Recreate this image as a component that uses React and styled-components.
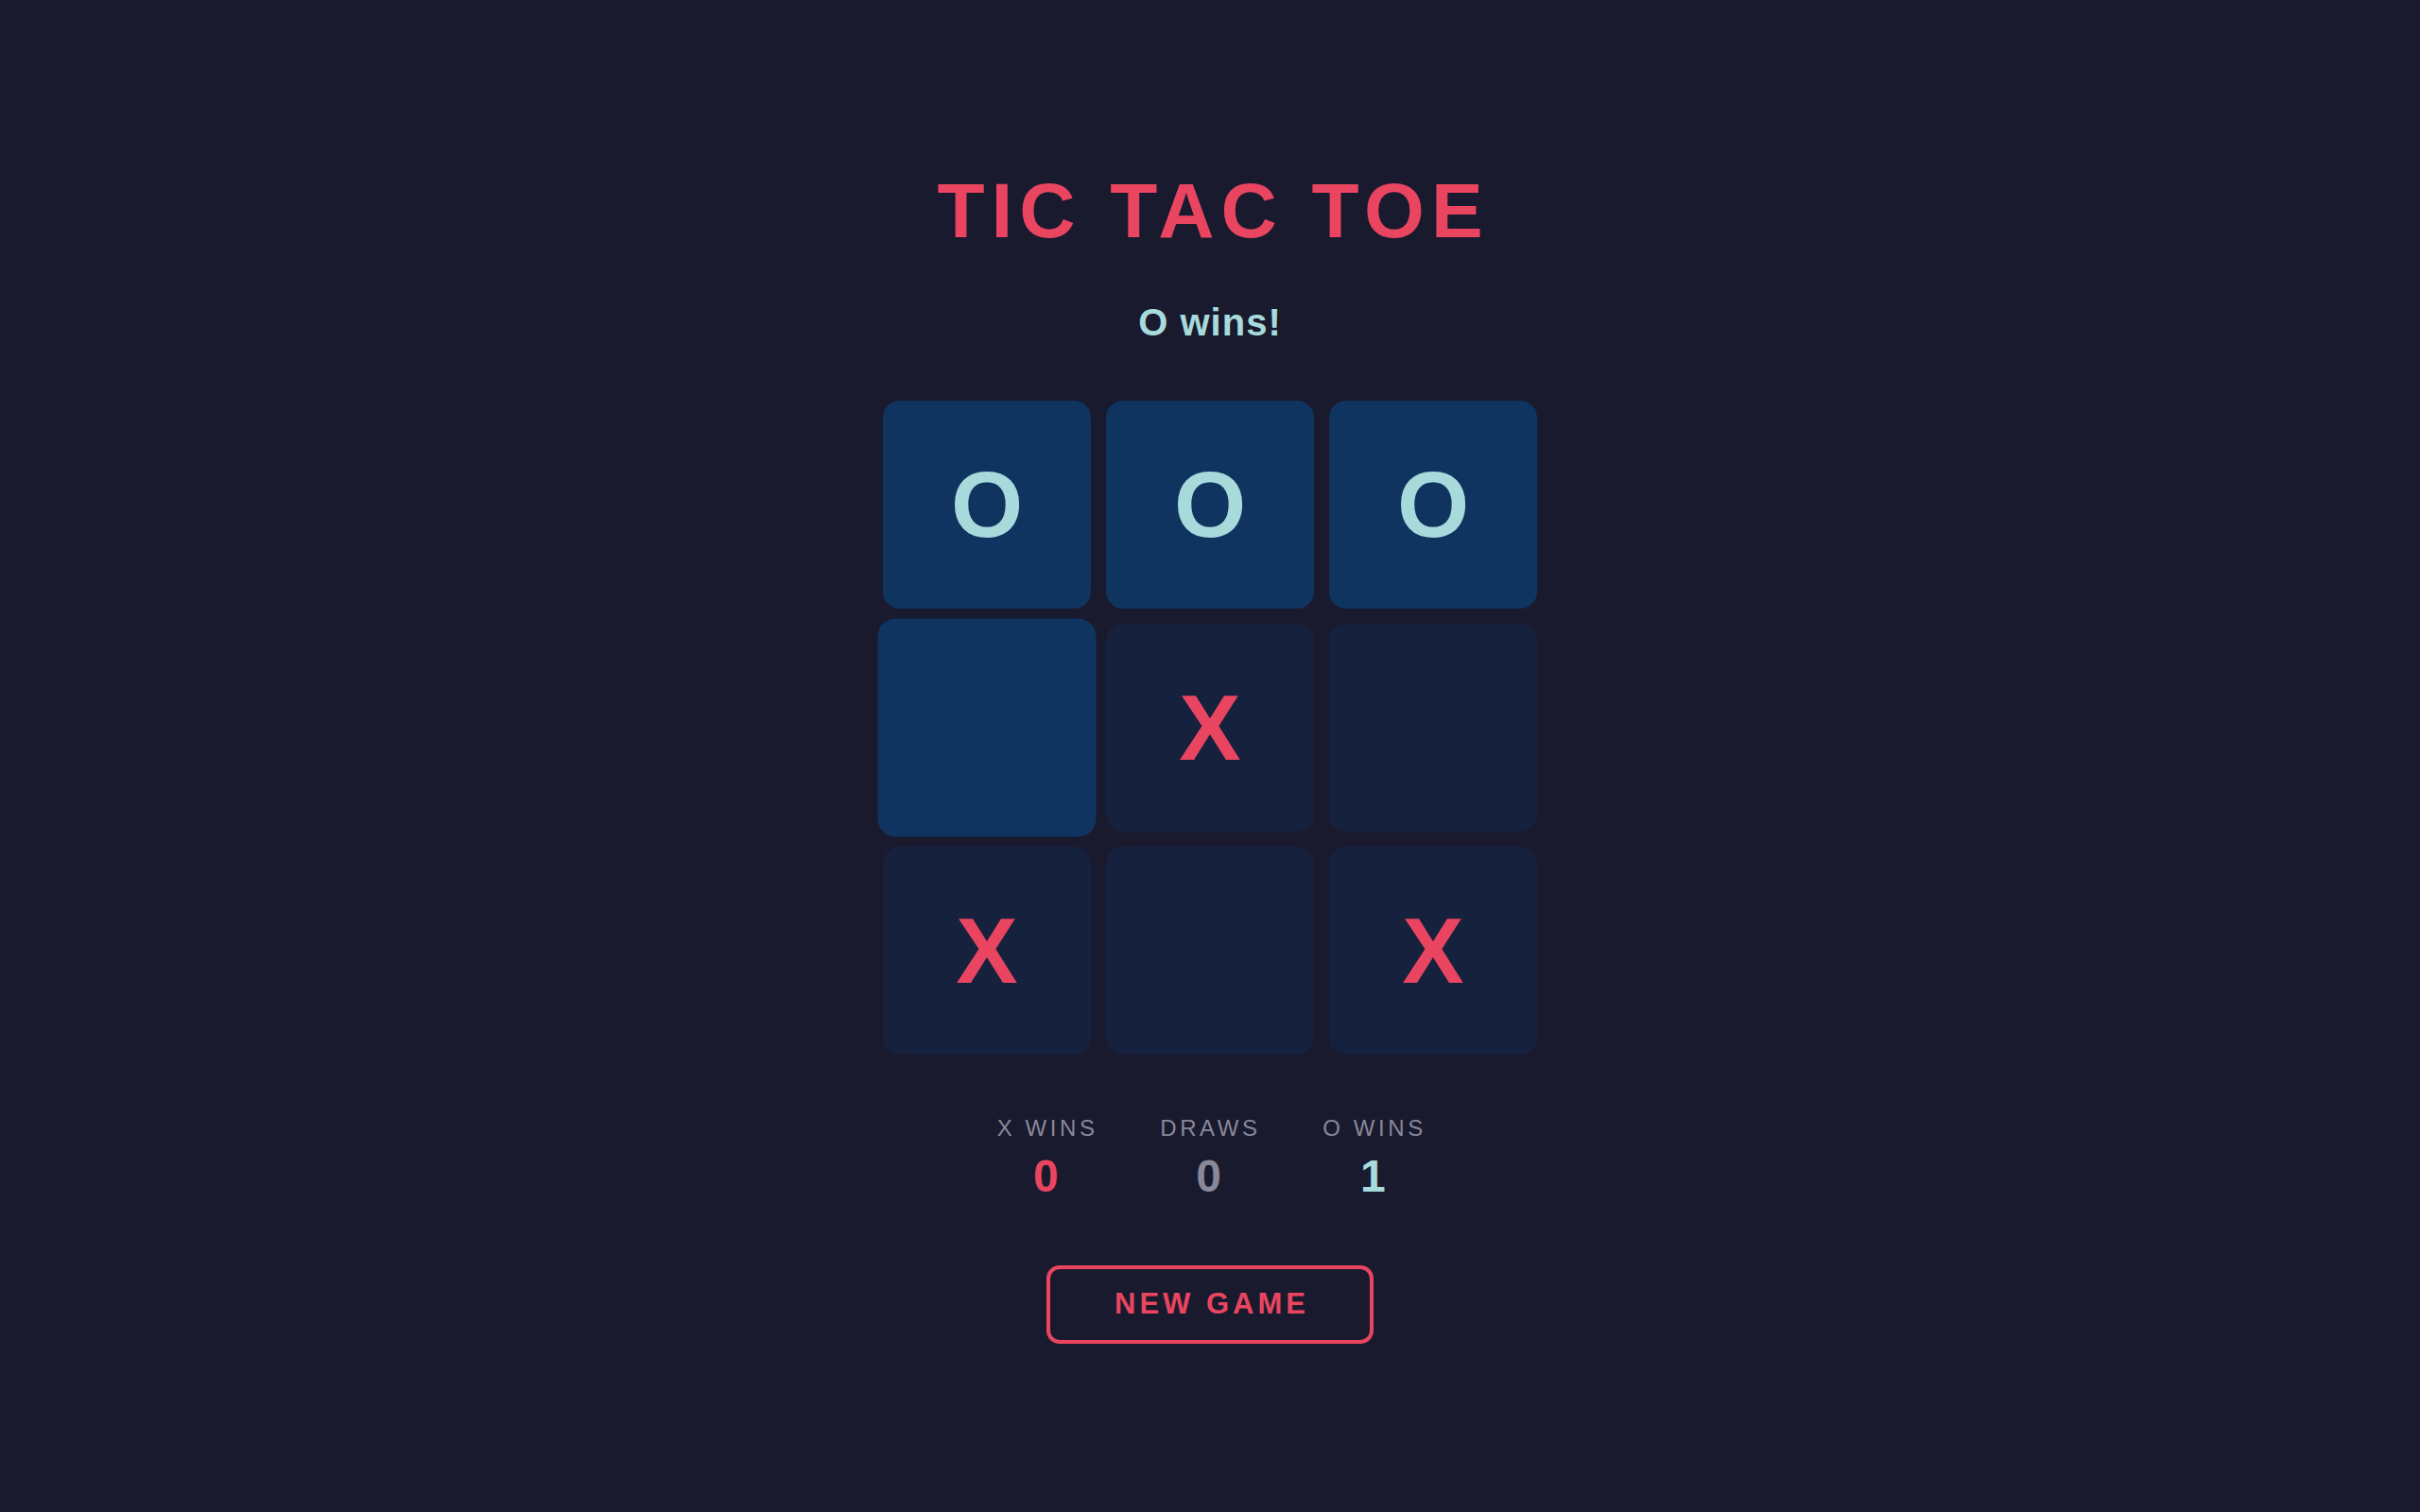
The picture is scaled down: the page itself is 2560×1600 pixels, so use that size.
import styled, { createGlobalStyle } from 'styled-components';

const RED = '#e94560';
const TEAL = '#a8dadc';
const GREY = '#888899';

const board = ['O', 'O', 'O', '', 'X', '', 'X', '', 'X'];
const winLine = [0, 1, 2];
const hoveredCell = 3;

const GlobalStyle = createGlobalStyle`
    html, body {
        margin: 0;
        padding: 0;
        background: #1a1a2e;
    }

    body {
        font-family: "Liberation Sans", Arial, Helvetica, sans-serif;
    }
`;

export default function App() {
    return <>
        <GlobalStyle />
        <Page>
            <Title>TIC TAC TOE</Title>
            <Status>O wins!</Status>

            <Board>
                {board.map((mark, i) => (
                    <Cell
                        key={i}
                        $win={winLine.includes(i)}
                        $hovered={i === hoveredCell}
                        $mark={mark}
                    >
                        {mark}
                    </Cell>
                ))}
            </Board>

            <Scores>
                <Score>
                    <ScoreLabel>X WINS</ScoreLabel>
                    <ScoreValue $color={RED}>0</ScoreValue>
                </Score>
                <Score>
                    <ScoreLabel>DRAWS</ScoreLabel>
                    <ScoreValue $color={GREY}>0</ScoreValue>
                </Score>
                <Score>
                    <ScoreLabel>O WINS</ScoreLabel>
                    <ScoreValue $color={TEAL}>1</ScoreValue>
                </Score>
            </Scores>

            <NewGameButton>NEW GAME</NewGameButton>
        </Page>
    </>
}

const Page = styled.main`
    min-height: 100vh;
    display: flex;
    flex-direction: column;
    align-items: center;
    justify-content: center;
    padding-top: 3px;
    box-sizing: border-box;
`;

const Title = styled.h1`
    margin: 0;
    font-size: 82px;
    line-height: 1;
    font-weight: 700;
    letter-spacing: 7px;
    padding-left: 7px;
    color: ${RED};
`;

const Status = styled.p`
    margin: 57px 0 0;
    font-size: 40px;
    line-height: 1;
    font-weight: 700;
    letter-spacing: 1px;
    color: ${TEAL};
`;

const Board = styled.div`
    margin-top: 63px;
    display: grid;
    grid-template-columns: repeat(3, 220px);
    grid-auto-rows: 220px;
    gap: 16px;
`;

const Cell = styled.button`
    border: none;
    padding: 0;
    border-radius: 18px;
    display: flex;
    align-items: center;
    justify-content: center;
    font-family: inherit;
    font-size: 98px;
    font-weight: 700;
    line-height: 1;
    cursor: pointer;
    color: ${p => p.$mark === 'X' ? RED : TEAL};
    background: ${p => (p.$win || p.$hovered) ? '#0f3460' : '#16213e'};
    transform: ${p => p.$hovered ? 'scale(1.05)' : 'none'};
`;

const Scores = styled.div`
    margin-top: 66px;
    display: flex;
    gap: 62px;
`;

const Score = styled.div`
    display: flex;
    flex-direction: column;
    align-items: center;
    gap: 15px;
`;

const ScoreLabel = styled.span`
    font-size: 24px;
    line-height: 1;
    letter-spacing: 3.6px;
    padding-left: 3.6px;
    color: ${GREY};
`;

const ScoreValue = styled.span`
    font-size: 48px;
    line-height: 1;
    font-weight: 700;
    color: ${p => p.$color};
`;

const NewGameButton = styled.button`
    margin-top: 70px;
    width: 346px;
    height: 83px;
    box-sizing: border-box;
    background: transparent;
    border: 4px solid ${RED};
    border-radius: 14px;
    font-family: inherit;
    font-size: 31px;
    font-weight: 700;
    letter-spacing: 4px;
    padding: 0 0 0 4px;
    color: ${RED};
    cursor: pointer;
`;
